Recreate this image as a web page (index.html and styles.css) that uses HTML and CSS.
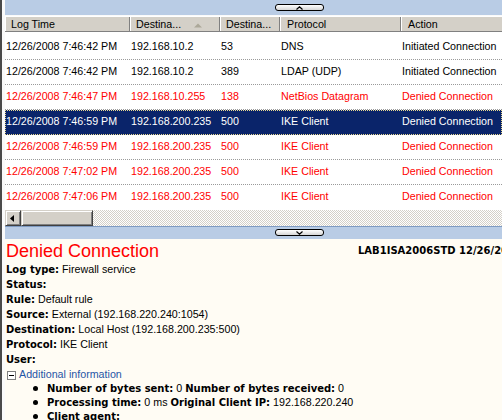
FILE: index.html
```html
<!DOCTYPE html>
<html>
<head>
<meta charset="utf-8">
<link rel="stylesheet" href="styles.css">
</head>
<body>
<div class="frame">
  <div class="bar bar-top">
    <span class="pill"><svg width="7" height="4" viewBox="0 0 7 4"><polyline points="0.5,3.5 3.5,0.8 6.5,3.5" fill="none" stroke="#000" stroke-width="1.2"/></svg></span>
  </div>
  <div class="head">
    <div class="hc">Log Time</div>
    <div class="hc">Destina...<svg class="sort" width="8" height="5" viewBox="0 0 8 5"><polygon points="0,4.5 4,0.5 8,4.5" fill="#aca899"/></svg></div>
    <div class="hc">Destina...</div>
    <div class="hc">Protocol</div>
    <div class="hc">Action</div>
  </div>
  <div class="rows">
    <div class="row"><span>12/26/2008 7:46:42 PM</span><span>192.168.10.2</span><span>53</span><span>DNS</span><span>Initiated Connection</span></div>
    <div class="row"><span>12/26/2008 7:46:42 PM</span><span>192.168.10.2</span><span>389</span><span>LDAP (UDP)</span><span>Initiated Connection</span></div>
    <div class="row denied"><span>12/26/2008 7:46:47 PM</span><span>192.168.10.255</span><span>138</span><span>NetBios Datagram</span><span>Denied Connection</span></div>
    <div class="row selected"><span>12/26/2008 7:46:59 PM</span><span>192.168.200.235</span><span>500</span><span>IKE Client</span><span>Denied Connection</span></div>
    <div class="row denied"><span>12/26/2008 7:46:59 PM</span><span>192.168.200.235</span><span>500</span><span>IKE Client</span><span>Denied Connection</span></div>
    <div class="row denied"><span>12/26/2008 7:47:02 PM</span><span>192.168.200.235</span><span>500</span><span>IKE Client</span><span>Denied Connection</span></div>
    <div class="row denied last"><span>12/26/2008 7:47:06 PM</span><span>192.168.200.235</span><span>500</span><span>IKE Client</span><span>Denied Connection</span></div>
  </div>
  <div class="hscroll">
    <div class="sbtn"><svg width="4" height="7" viewBox="0 0 4 7"><polygon points="4,0 0,3.5 4,7" fill="#000"/></svg></div>
    <div class="thumb"></div>
  </div>
  <div class="bar bar-bottom">
    <span class="pill"><svg width="7" height="4" viewBox="0 0 7 4"><polyline points="0.5,0.5 3.5,3.2 6.5,0.5" fill="none" stroke="#000" stroke-width="1.2"/></svg></span>
  </div>
  <div class="detail">
    <div class="title-row">
      <div class="title">Denied Connection</div>
      <div class="host">LAB1ISA2006STD 12/26/2008 7:46:59 PM</div>
    </div>
    <div class="line"><b>Log type:</b> Firewall service</div>
    <div class="line"><b>Status:</b></div>
    <div class="line"><b>Rule:</b> Default rule</div>
    <div class="line"><b>Source:</b> External (192.168.220.240:1054)</div>
    <div class="line"><b>Destination:</b> Local Host (192.168.200.235:500)</div>
    <div class="line"><b>Protocol:</b> IKE Client</div>
    <div class="line"><b>User:</b></div>
    <div class="line"><span class="toggle"></span><span class="addl">Additional information</span></div>
    <ul class="bullets">
      <li><b>Number of bytes sent:</b> 0 <b>Number of bytes received:</b> 0</li>
      <li><b>Processing time:</b> 0 ms <b>Original Client IP:</b> 192.168.220.240</li>
      <li><b>Client agent:</b></li>
    </ul>
  </div>
</div>
</body>
</html>
```
FILE: styles.css
```css
html, body {
  margin: 0;
  padding: 0;
}
body {
  background: #fafafa;
  font-family: "Liberation Sans", Arial, sans-serif;
  font-size: 10.7px;
  color: #000;
}
.frame {
  width: 502px;
  height: 420px;
  box-sizing: border-box;
  border-left: 2px solid #4a4a4a;
  padding-left: 3px;
  overflow: hidden;
  background: #fafafa;
}
.bar {
  background: #b9cce5;
  display: flex;
}
.bar-top {
  height: 15px;
  margin-bottom: 1px;
}
.bar-bottom {
  height: 12px;
  border-top: 1px solid #7f9bc2;
}
.pill {
  box-sizing: border-box;
  width: 49px;
  height: 7px;
  margin-left: 270px;
  border: 1px solid #000;
  border-radius: 3px;
  background: linear-gradient(#ffffff, #d6d6d6);
  display: flex;
  align-items: center;
  justify-content: center;
}
.bar-top .pill {
  margin-top: 4px;
}
.bar-bottom .pill {
  margin-top: 2px;
}
.pill svg {
  display: block;
}
.head {
  display: grid;
  grid-template-columns: 125px 90px 60px 121px 1fr;
  height: 16px;
  box-sizing: border-box;
  background: #d4d0c8;
  border-top: 1px solid #fff;
  border-bottom: 1px solid #808080;
}
.hc {
  box-sizing: border-box;
  border-left: 1px solid #fff;
  border-right: 1px solid #808080;
  padding: 1px 0 0 5px;
  line-height: 12px;
  white-space: nowrap;
  overflow: hidden;
  display: flex;
  align-items: flex-start;
}
.hc:nth-child(4), .hc:nth-child(5) {
  padding-left: 6px;
}
.hc:last-child {
  border-right: none;
}
.sort {
  margin: 5px 0 0 13px;
  flex-shrink: 0;
}
.rows {
  background: #fff;
  padding-top: 3px;
}
.row {
  display: grid;
  grid-template-columns: 125px 90px 60px 121px 1fr;
  height: 25px;
  box-sizing: border-box;
  border-bottom: 1px dotted #9a9a9a;
  line-height: 23px;
  white-space: nowrap;
}
.row span {
  padding-left: 1px;
  overflow: hidden;
}
.row.denied {
  color: #ff0000;
}
.row.selected {
  background: #0a246a;
  color: #fff;
  border-bottom-color: #0a246a;
  outline: 1px dotted #e8d890;
  outline-offset: -1px;
}
.row.last {
  border-bottom: none;
}
.hscroll {
  height: 16px;
  display: flex;
  background: repeating-conic-gradient(#d4d0c8 0 25%, #ffffff 0 50%) 0 0 / 2px 2px;
}
.sbtn, .thumb {
  box-sizing: border-box;
  height: 16px;
  background: #d4d0c8;
  border: 1px solid;
  border-color: #d4d0c8 #404040 #404040 #d4d0c8;
  box-shadow: inset 1px 1px #fff, inset -1px -1px #808080;
}
.sbtn {
  width: 16px;
  display: flex;
  align-items: center;
  justify-content: center;
}
.sbtn svg {
  display: block;
  margin-left: -2px;
}
.thumb {
  width: 72px;
}
.detail {
  background: #fffcf4;
  height: 181px;
  padding-left: 1px;
  overflow: hidden;
}
.title-row {
  display: flex;
  padding-top: 1px;
  height: 22px;
}
.title {
  font-size: 18px;
  line-height: 22px;
  color: #ff0000;
  white-space: nowrap;
}
.host {
  margin-left: auto;
  width: 144px;
  flex-shrink: 0;
  overflow: hidden;
  white-space: nowrap;
  font-family: "DejaVu Sans", sans-serif;
  font-weight: bold;
  font-size: 10px;
  line-height: 12px;
  margin-top: 5px;
}
.line {
  height: 15px;
  line-height: 15px;
  white-space: nowrap;
}
b {
  font-family: "DejaVu Sans", sans-serif;
  font-weight: bold;
  font-size: 10px;
  line-height: 1;
}
.toggle {
  display: inline-block;
  box-sizing: border-box;
  width: 9px;
  height: 9px;
  border: 1px solid #808080;
  background: linear-gradient(#000, #000) center / 5px 1px no-repeat, #fff;
  margin: 0 3px 0 1px;
  vertical-align: -2px;
}
.addl {
  color: #1f56a6;
}
.bullets {
  list-style: none;
  margin: -1px 0 0 0;
  padding: 0;
}
.bullets li {
  line-height: 14px;
  height: 14px;
  white-space: nowrap;
}
.bullets li::before {
  content: "";
  display: inline-block;
  width: 5px;
  height: 5px;
  border-radius: 50%;
  background: #000;
  margin: 0 9px 0 27px;
  vertical-align: 1px;
}
```
